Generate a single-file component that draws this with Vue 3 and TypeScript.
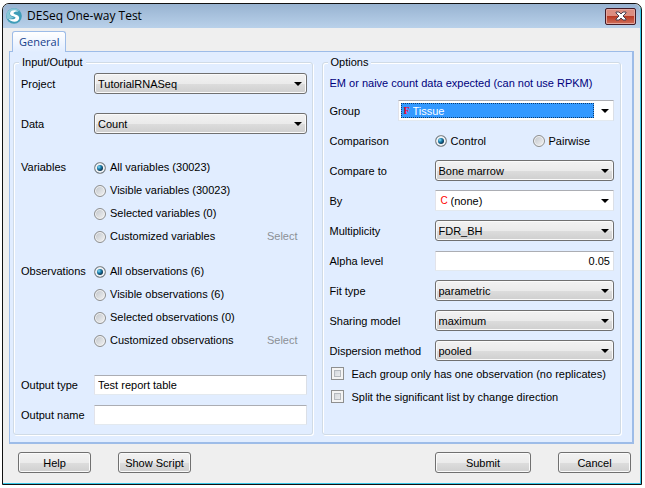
<script setup lang="ts">
import { ref } from 'vue'

interface Choice {
  id: string
  label: string
}

const variableChoices: Choice[] = [
  { id: 'all', label: 'All variables (30023)' },
  { id: 'visible', label: 'Visible variables (30023)' },
  { id: 'selected', label: 'Selected variables (0)' },
  { id: 'custom', label: 'Customized variables' },
]
const observationChoices: Choice[] = [
  { id: 'all', label: 'All observations (6)' },
  { id: 'visible', label: 'Visible observations (6)' },
  { id: 'selected', label: 'Selected observations (0)' },
  { id: 'custom', label: 'Customized observations' },
]

const variables = ref('all')
const observations = ref('all')
const comparison = ref('control')
const outputType = ref('Test report table')
const outputName = ref('')
const alpha = ref('0.05')
const noReplicates = ref(false)
const splitList = ref(false)
</script>

<template>
  <main class="dialog">
    <header class="titlebar">
      <svg class="logo" viewBox="0 0 16 16" aria-hidden="true">
        <circle cx="8" cy="8" r="7.8" fill="#3f9db8" />
        <path d="M0.500 6A7.700 7.700 0 0 1 14 3.200L10 2.500Q4 2 3.500 5.500Q4 8.500 8 9.500Q5 11 1.300 11Q0 8.500 0.500 6Z" fill="#86c6d6" />
        <path d="M12.500 3.500C8 0.800 3.600 2.600 4 5.900C4.500 8.600 9.800 8 9.500 9.800C9 11.500 6 11.600 2.500 11C6 15 13 14.500 13.200 10C13 6.300 7.300 7 7.500 5.100C7.700 3.700 10 3.300 12.500 3.500Z" fill="#fff" />
      </svg>
      <h1>DESeq One-way Test</h1>
      <button type="button" class="close" aria-label="Close">
        <svg viewBox="0 0 12 10" aria-hidden="true">
          <path d="M1 1H4L6 3L8 1H11V2L8 5L11 8V9H8L6 7L4 9H1V8L4 5L1 2Z" fill="#fff" stroke="#4b4050" stroke-width="1" />
        </svg>
      </button>
    </header>

    <form class="body" @submit.prevent>
      <div class="tabs" role="tablist">
        <button type="button" class="tab" role="tab" aria-selected="true">General</button>
      </div>

      <div class="panel">
        <fieldset class="group">
          <legend>Input/Output</legend>
          <div class="left">
            <div class="row">
              <label for="project">Project</label>
              <span class="combo"><select id="project"><option>TutorialRNASeq</option></select></span>
            </div>
            <div class="row data">
              <label for="data">Data</label>
              <span class="combo"><select id="data"><option>Count</option></select></span>
            </div>
            <div class="choices" role="radiogroup" aria-labelledby="variables-title">
              <span id="variables-title" class="title">Variables</span>
              <div class="list">
                <div v-for="c in variableChoices" :key="c.id" class="choice">
                  <label><input v-model="variables" type="radio" name="variables" :value="c.id" />{{ c.label }}</label>
                  <button v-if="c.id === 'custom'" type="button" class="pick" disabled>Select</button>
                </div>
              </div>
            </div>
            <div class="choices" role="radiogroup" aria-labelledby="observations-title">
              <span id="observations-title" class="title">Observations</span>
              <div class="list">
                <div v-for="c in observationChoices" :key="c.id" class="choice">
                  <label><input v-model="observations" type="radio" name="observations" :value="c.id" />{{ c.label }}</label>
                  <button v-if="c.id === 'custom'" type="button" class="pick" disabled>Select</button>
                </div>
              </div>
            </div>
            <div class="outputs">
              <div class="row">
                <label for="otype">Output type</label>
                <input id="otype" v-model="outputType" type="text" class="text" />
              </div>
              <div class="row">
                <label for="oname">Output name</label>
                <input id="oname" v-model="outputName" type="text" class="text" />
              </div>
            </div>
          </div>
        </fieldset>

        <fieldset class="group">
          <legend>Options</legend>
          <div class="right">
            <p class="note">EM or naive count data expected (can not use RPKM)</p>
            <div class="row short">
              <label for="group">Group</label>
              <span class="combo flat active"><span class="kind factor" aria-hidden="true">F</span><select id="group"><option>Tissue</option></select></span>
            </div>
            <div class="row" role="radiogroup" aria-labelledby="comparison-title">
              <span id="comparison-title" class="title">Comparison</span>
              <div class="pair">
                <label><input v-model="comparison" type="radio" name="comparison" value="control" />Control</label>
                <label><input v-model="comparison" type="radio" name="comparison" value="pairwise" />Pairwise</label>
              </div>
            </div>
            <div class="row">
              <label for="compare">Compare to</label>
              <span class="combo"><select id="compare"><option>Bone marrow</option></select></span>
            </div>
            <div class="row">
              <label for="by">By</label>
              <span class="combo flat"><span class="kind" aria-hidden="true">C</span><select id="by"><option>(none)</option></select></span>
            </div>
            <div class="row">
              <label for="multiplicity">Multiplicity</label>
              <span class="combo"><select id="multiplicity"><option>FDR_BH</option></select></span>
            </div>
            <div class="row">
              <label for="alpha">Alpha level</label>
              <input id="alpha" v-model="alpha" type="text" class="text number" />
            </div>
            <div class="row">
              <label for="fit">Fit type</label>
              <span class="combo"><select id="fit"><option>parametric</option></select></span>
            </div>
            <div class="row">
              <label for="sharing">Sharing model</label>
              <span class="combo"><select id="sharing"><option>maximum</option></select></span>
            </div>
            <div class="row">
              <label for="dispersion">Dispersion method</label>
              <span class="combo"><select id="dispersion"><option>pooled</option></select></span>
            </div>
            <div class="checks">
              <label><input v-model="noReplicates" type="checkbox" />Each group only has one observation (no replicates)</label>
              <label><input v-model="splitList" type="checkbox" />Split the significant list by change direction</label>
            </div>
          </div>
        </fieldset>
      </div>

      <footer class="actions">
        <button type="button" class="btn">Help</button>
        <button type="button" class="btn">Show Script</button>
        <button type="submit" class="btn submit">Submit</button>
        <button type="button" class="btn">Cancel</button>
      </footer>
    </form>
  </main>
</template>

<style>
body {
  margin: 0;
  background: #fff;
}
</style>

<style scoped>
* {
  box-sizing: border-box;
}
.dialog {
  margin: 3px 3px 0 2px;
  border: 1px solid #111;
  border-radius: 7px 7px 0 0;
  box-shadow: inset -1px -1px #35c8e8;
  background: #efefef;
  color: #000;
  font-family: "Liberation Sans", Arial, sans-serif;
  font-size: 11px;
  line-height: 16px;
  white-space: nowrap;
}
button,
input,
select {
  margin: 0;
  color: inherit;
  font: inherit;
}
.titlebar {
  display: flex;
  align-items: center;
  height: 24px;
  padding: 0 4px 0 3px;
  margin-right: 1px;
  border-radius: 6px 6px 0 0;
  background: linear-gradient(#98b3d1, #b9d1ea);
}
.logo {
  width: 16px;
  height: 16px;
}
h1 {
  flex: 1;
  margin: 0 0 0 5px;
  font: 12px/20px "Open Sans", "Noto Sans", sans-serif;
}
.close {
  display: flex;
  align-items: center;
  justify-content: center;
  width: 31px;
  height: 17px;
  padding: 0;
  border: 1px solid #431b26;
  border-radius: 2px;
  box-shadow: inset 0 0 0 1px #e2a79f;
  background: linear-gradient(#dc8d80 45%, #b93a24 50%, #d0705c);
}
.close svg {
  width: 12px;
  height: 10px;
}
.body {
  padding: 3px 7px 11px 6px;
}
.tabs {
  display: flex;
  padding-left: 3px;
}
.tab {
  position: relative;
  height: 21px;
  margin-bottom: -1px;
  padding: 0 6px;
  border: 1px solid #9dbce8;
  border-bottom: 0;
  border-radius: 3px 3px 0 0;
  background: linear-gradient(#fff, #e1edff);
  color: #153e8c;
  font: 11px/18px "Open Sans", "Noto Sans", sans-serif;
}
.panel {
  display: flex;
  gap: 9px;
  padding: 2px 11px 7px 3px;
  border: 1px solid #9dbce8;
  border-bottom-width: 2px;
  border-right-width: 2px;
  background: #e1edff;
}
.group {
  flex: 1 1 0;
  min-width: 0;
  margin: 0;
  padding: 0;
  border: 1px solid #d0dbe6;
  border-radius: 3px;
  box-shadow: 1px 1px #fff, inset 1px 1px #fff;
}
legend {
  height: 16px;
  margin-left: 5px;
  padding: 0 3px;
  background: #e1edff;
}
.left {
  padding: 3px 5px 9px 7px;
}
.right {
  padding: 3px 6px 9px 7px;
}
.row {
  display: grid;
  grid-template-columns: 73px 1fr;
  align-items: center;
  height: 21px;
}
.row.data {
  margin-top: 19px;
}
.right .row {
  grid-template-columns: 105px 1fr;
  margin-bottom: 9px;
}
.right .row.short {
  grid-template-columns: 68px 1fr;
}
.note {
  margin: 0 0 7px;
  color: #00007c;
  line-height: 20px;
}
.choices {
  display: grid;
  grid-template-columns: 73px 1fr;
  margin-top: 22px;
  line-height: 23px;
}
.choices + .choices {
  margin-top: 12px;
}
.choice {
  display: flex;
  align-items: center;
  justify-content: space-between;
  height: 23px;
}
.choice label,
.pair label,
.checks label {
  display: flex;
  align-items: center;
  gap: 4px;
}
.pair {
  display: grid;
  grid-template-columns: 98px 1fr;
}
.pick {
  padding: 0 9px;
  border: 0;
  background: none;
  color: #8c9096;
}
.outputs {
  display: grid;
  gap: 9px;
  margin-top: 22px;
}
.combo {
  position: relative;
  display: block;
}
.combo::after {
  content: "";
  position: absolute;
  top: 9px;
  right: 5px;
  border: 4px solid transparent;
  border-top-color: #000;
  border-bottom: 0;
  pointer-events: none;
}
select {
  appearance: none;
  display: block;
  width: 100%;
  height: 21px;
  padding: 0 16px 0 3px;
  border: 1px solid #707070;
  border-radius: 3px;
  box-shadow: inset 0 0 0 1px #fafafa;
  background: linear-gradient(#f2f2f2, #ebebeb 50%, #dddddd 51%, #cfcfcf);
}
.flat select {
  padding-left: 15px;
  border-color: #abadb3 #dbdfe6 #e3e9ef #e2e3ea;
  border-radius: 1px;
  box-shadow: none;
  background: #fff;
}
.active select {
  padding-left: 14px;
  box-shadow: inset 0 0 0 2px #fff;
  background: linear-gradient(#fff, #fff) right / 19px 100% no-repeat, #3399ff;
  color: #fff;
}
.active::before {
  content: "";
  position: absolute;
  inset: 3px 20px 3px 3px;
  border: 1px dotted #0b3c70;
  pointer-events: none;
}
.kind {
  position: absolute;
  top: 4px;
  left: 6px;
  color: #f00;
  font: 10px/14px "Liberation Sans", Arial, sans-serif;
  pointer-events: none;
}
.kind.factor {
  color: #f0002c;
  font: bold 10px/14px "Liberation Serif", serif;
}
.text {
  width: 100%;
  height: 20px;
  padding: 0 3px;
  border: 1px solid;
  border-color: #abadb3 #dbdfe6 #e3e9ef #e2e3ea;
  border-radius: 1px;
  background: #fff;
}
.number {
  text-align: right;
}
input[type="radio"] {
  appearance: none;
  flex: none;
  width: 12px;
  height: 12px;
  border: 1px solid #8e8f8f;
  border-radius: 50%;
  box-shadow: inset 0 0 0 1px #f4f4f4;
  background: linear-gradient(135deg, #bfc4ca, #f4f4f4);
}
input[type="radio"]:checked {
  box-shadow: inset 0 0 0 2px #f0f2f4;
  background: radial-gradient(circle at 4px 4px, #8fe0f8 0, #1b7fae 2px, #0b3552 4px);
}
input[type="checkbox"] {
  appearance: none;
  flex: none;
  width: 13px;
  height: 13px;
  border: 1px solid #8e8f8f;
  outline: 1px solid #b5b9be;
  outline-offset: -4px;
  box-shadow: inset 0 0 0 2px #f4f4f4;
  background: linear-gradient(135deg, #c9ced4, #f6f6f6);
}
.checks {
  padding: 0 0 0 1px;
  margin-top: -8px;
}
.checks label {
  height: 23px;
  gap: 8px;
}
.actions {
  display: flex;
  gap: 27px;
  padding: 8px 3px 0 9px;
}
.btn {
  width: 73px;
  height: 21px;
  padding: 0;
  border: 1px solid #707070;
  border-radius: 3px;
  box-shadow: inset 0 0 0 1px #fafafa;
  background: linear-gradient(#f2f2f2, #ebebeb 50%, #dddddd 51%, #cfcfcf);
}
.submit {
  width: 96px;
  margin-left: auto;
}
</style>
